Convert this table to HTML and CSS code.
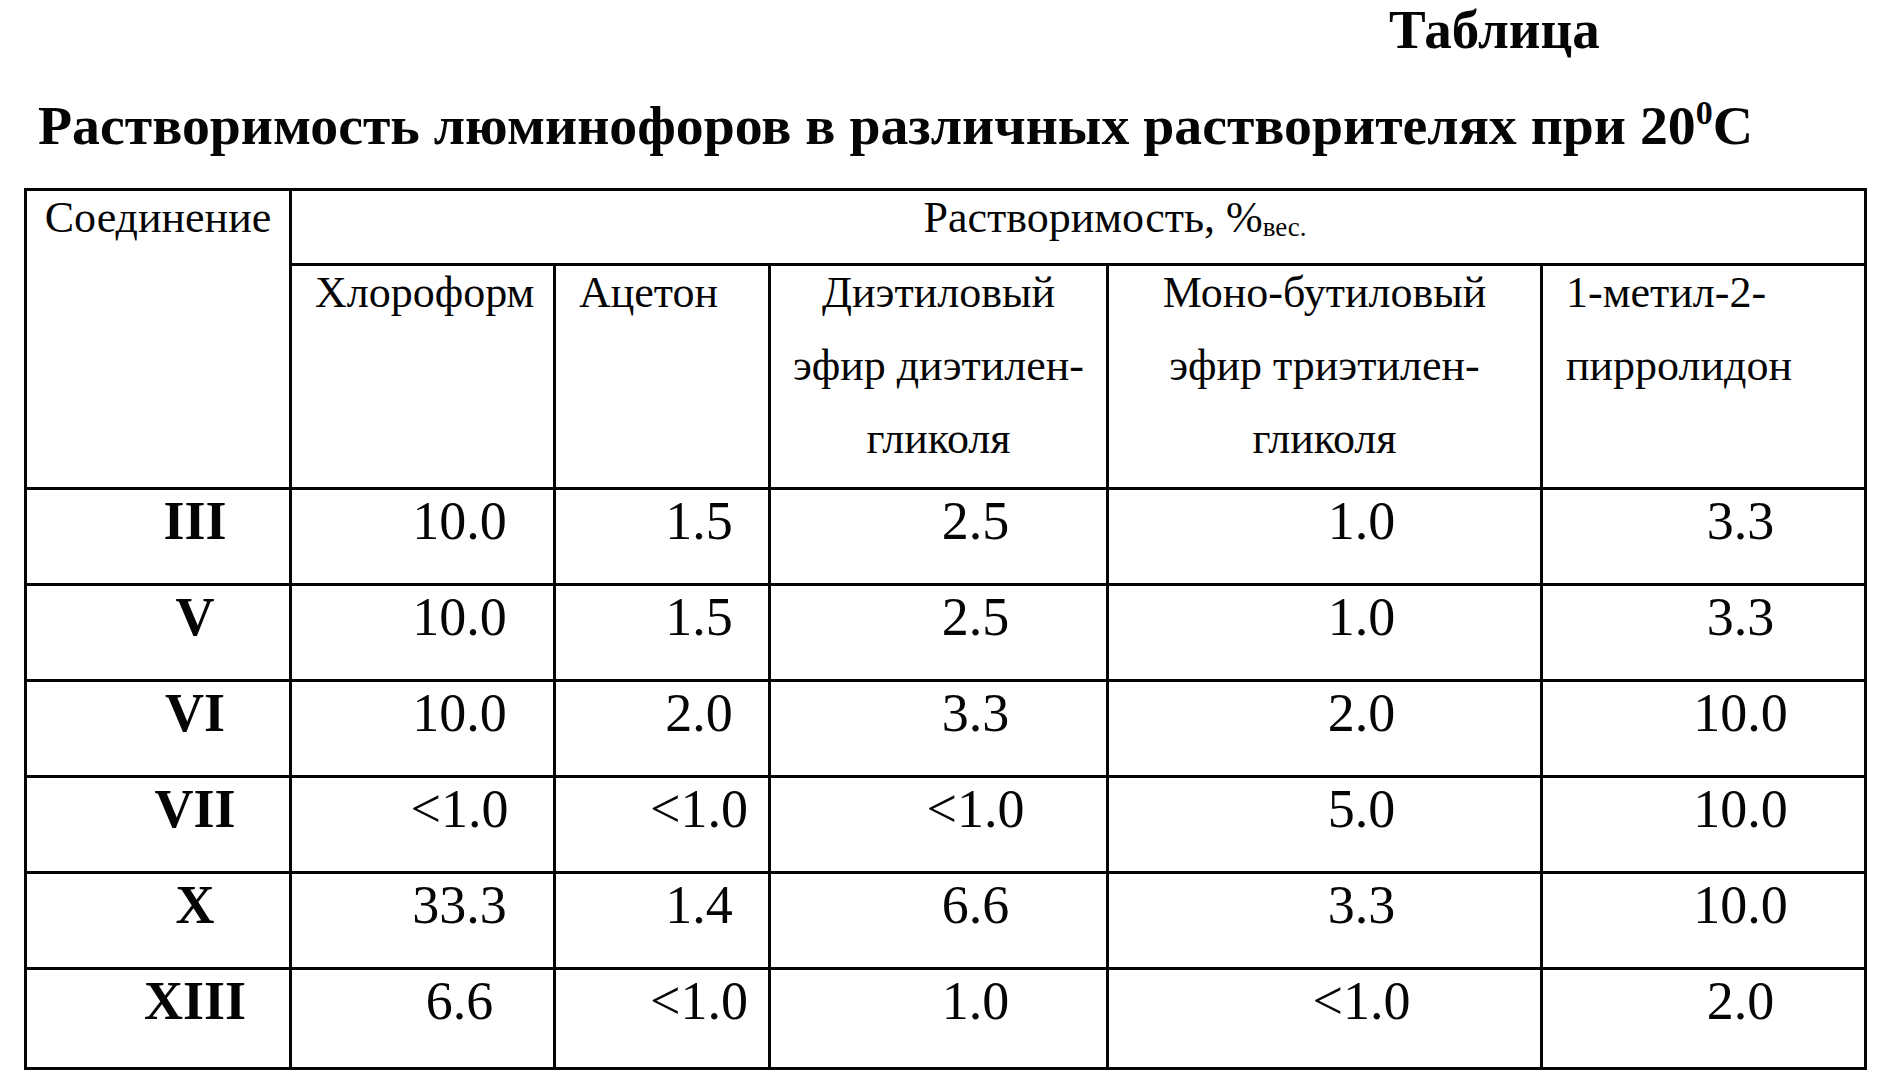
FILE: index.html
```html
<!DOCTYPE html>
<html lang="ru">
<head>
<meta charset="utf-8">
<title>Таблица</title>
<link rel="stylesheet" href="styles.css">
</head>
<body>
<div class="page">
  <div class="doc-label">Таблица</div>
  <h1 class="doc-title">Растворимость люминофоров в различных растворителях при 20<sup class="deg">0</sup>C</h1>
  <table class="sol">
    <colgroup>
      <col class="c-compound">
      <col class="c-chloro">
      <col class="c-acetone">
      <col class="c-diethyl">
      <col class="c-mono">
      <col class="c-nmp">
    </colgroup>
    <tr class="head-top">
      <th rowspan="2" class="compound">Соединение</th>
      <th colspan="5" class="span">Растворимость, %<sub class="unit">вес.</sub></th>
    </tr>
    <tr class="head-sub">
      <th class="al-left"><div class="hd">Хлороформ</div></th>
      <th class="al-left"><div class="hd">Ацетон</div></th>
      <th class="al-center"><div class="hd">Диэтиловый<br>эфир диэтилен-<br>гликоля</div></th>
      <th class="al-center"><div class="hd">Моно-бутиловый<br>эфир триэтилен-<br>гликоля</div></th>
      <th class="al-left"><div class="hd">1-метил-2-<br>пирролидон</div></th>
    </tr>
    <tr class="row">
      <th class="roman">III</th><td>10.0</td><td>1.5</td><td>2.5</td><td>1.0</td><td>3.3</td>
    </tr>
    <tr class="row">
      <th class="roman">V</th><td>10.0</td><td>1.5</td><td>2.5</td><td>1.0</td><td>3.3</td>
    </tr>
    <tr class="row">
      <th class="roman">VI</th><td>10.0</td><td>2.0</td><td>3.3</td><td>2.0</td><td>10.0</td>
    </tr>
    <tr class="row">
      <th class="roman">VII</th><td>&lt;1.0</td><td>&lt;1.0</td><td>&lt;1.0</td><td>5.0</td><td>10.0</td>
    </tr>
    <tr class="row">
      <th class="roman">X</th><td>33.3</td><td>1.4</td><td>6.6</td><td>3.3</td><td>10.0</td>
    </tr>
    <tr class="row row-last">
      <th class="roman">XIII</th><td>6.6</td><td>&lt;1.0</td><td>1.0</td><td>&lt;1.0</td><td>2.0</td>
    </tr>
  </table>
</div>
</body>
</html>
```

FILE: styles.css
```css
html, body {
  margin: 0;
  padding: 0;
  background: #ffffff;
}

body {
  color: #050505;
  font-family: "Liberation Serif", "Times New Roman", "DejaVu Serif", serif;
}

.page {
  width: 1889px;
  height: 1092px;
  overflow: hidden;
  padding-top: 2px;
  box-sizing: border-box;
}

.doc-label {
  font-weight: 700;
  font-size: 55px;
  line-height: 56px;
  padding-left: 1389px;
}

.doc-title {
  margin: 39px 0 0 38px;
  font-weight: 700;
  font-size: 55.8px;
  line-height: 56px;
  white-space: nowrap;
}

.deg {
  font-size: 34px;
  line-height: 0;
  vertical-align: 20px;
}

.sol {
  margin: 35px 0 0 24px;
  border-collapse: collapse;
  table-layout: fixed;
  width: 1843px;
  border: 3px solid #050505;
}

.c-compound { width: 265px; }
.c-chloro   { width: 264px; }
.c-acetone  { width: 215px; }
.c-diethyl  { width: 338px; }
.c-mono     { width: 434px; }
.c-nmp      { width: 324px; }

.sol th,
.sol td {
  border: 3px solid #050505;
  padding: 0;
  vertical-align: top;
  font-weight: 400;
}

.head-top { height: 75px; }
.head-sub { height: 224px; }

.sol .head-top th,
.sol .head-sub th {
  font-size: 44px;
  line-height: 50px;
}

.sol .compound {
  text-align: center;
  padding-top: 2px;
}

.sol .span {
  text-align: center;
  padding: 2px 0 0 74px;
}

.unit {
  font-size: 27px;
  line-height: 0;
  vertical-align: -4px;
}

.sol .head-sub .hd {
  line-height: 73px;
  margin-top: -10px;
}

.sol .al-left {
  text-align: left;
  padding-left: 23px;
}

.sol .al-center {
  text-align: center;
}

.row {
  height: 96px;
}

.row-last {
  height: 100px;
}

.sol .row th,
.sol .row td {
  font-size: 54px;
  line-height: 60px;
  text-align: center;
  padding: 1px 0 0 74px;
}

.sol .row .roman {
  font-weight: 700;
}
```
